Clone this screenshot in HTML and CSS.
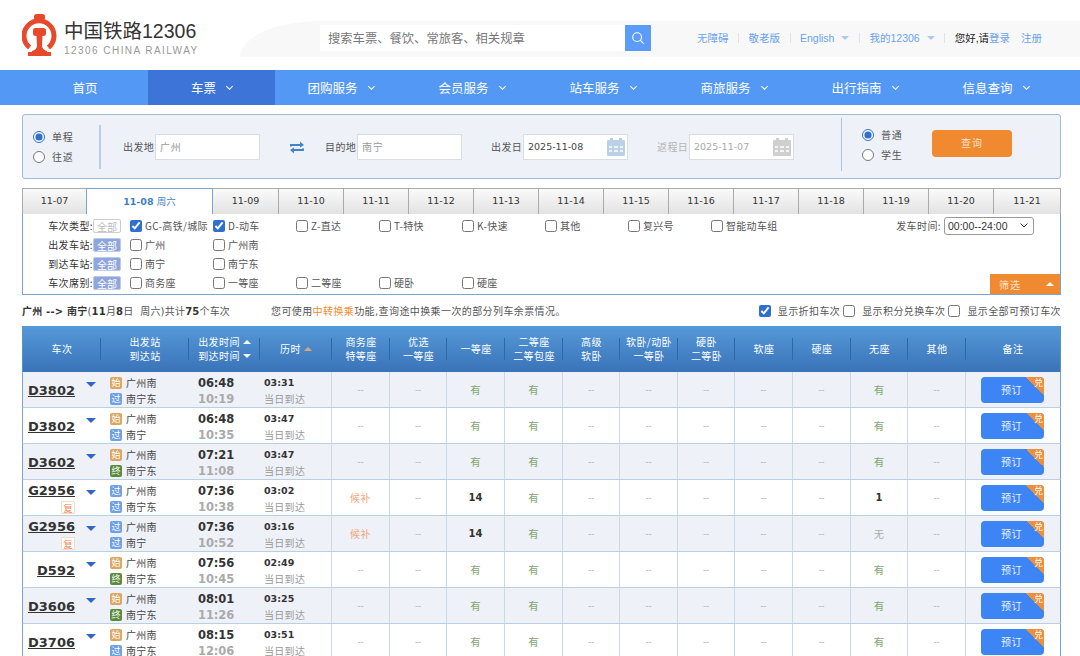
FILE: index.html
```html
<!DOCTYPE html>
<html lang="zh-CN">
<head>
<meta charset="utf-8">
<title>12306</title>
<link rel="stylesheet" href="styles.css">
</head>
<body>
<header class="top">
  <div class="logo">
    <svg class="logo-mark" viewBox="22 14 35 42" width="35" height="42">
      <path d="M29.6 47.5A15 15 0 1 1 48.4 47.5" fill="none" stroke="#e8492a" stroke-width="5" stroke-linecap="butt"/>
      <rect x="34" y="14" width="11" height="6" rx="2.5" fill="#e8492a"/>
      <path d="M33 30.5Q33 28 35.5 28H43.500Q46 28 46 30.500V33.500Q46 36 43 36H42.500L42 46Q42.500 50 47 51V55.500H32V51Q36.500 50 37 46L36.500 36H36Q33 36 33 33.500Z" fill="#e8492a"/>
      <rect x="28" y="52" width="23" height="4" fill="#e8492a"/>
    </svg>
    <div class="logo-text">
      <div class="logo-title">中国铁路12306</div>
      <div class="logo-sub">12306 CHINA RAILWAY</div>
    </div>
  </div>
  <div class="band">
    <div class="search">
      <div class="search-input">搜索车票、餐饮、常旅客、相关规章</div>
      <div class="search-btn">
        <svg viewBox="0 0 16 16" width="14" height="14"><circle cx="7" cy="7" r="5" fill="none" stroke="#fff" stroke-width="1.300"/><path d="M10.700 10.700L14.500 14.500" stroke="#fff" stroke-width="1.400" fill="none"/></svg>
      </div>
    </div>
    <nav class="links">
      <a>无障碍</a><i class="sep"></i>
      <a>敬老版</a><i class="sep"></i>
      <a>English<b class="drop"></b></a><i class="sep"></i>
      <a>我的12306<b class="drop"></b></a><i class="sep"></i>
      <span class="hello">您好,请</span><a>登录</a><a class="reg">注册</a>
    </nav>
  </div>
</header>

<nav class="menu">
  <a>首页</a>
  <a class="on">车票<i class="chev"></i></a>
  <a>团购服务<i class="chev"></i></a>
  <a>会员服务<i class="chev"></i></a>
  <a>站车服务<i class="chev"></i></a>
  <a>商旅服务<i class="chev"></i></a>
  <a>出行指南<i class="chev"></i></a>
  <a>信息查询<i class="chev"></i></a>
</nav>

<main class="main">
  <section class="query">
    <div class="radios r1">
      <label class="rad"><input type="radio" name="trip" checked>单程</label>
      <label class="rad"><input type="radio" name="trip">往返</label>
    </div>
    <span class="flab l1">出发地</span>
    <div class="field"><span class="ph">广州</span></div>
    <svg class="swap" viewBox="0 0 16 13" width="16" height="13"><path d="M1 5.500V3H11V0.500L15 4L11 6.500V5H3V5.500ZM15 7.500V10H5V12.500L1 9L5 6.500V8H13V7.500Z" fill="#3d85c6"/></svg>
    <span class="flab l2">目的地</span>
    <div class="field"><span class="ph">南宁</span></div>
    <span class="flab l3">出发日</span>
    <div class="field"><span class="date">2025-11-08</span>
      <svg class="cal" viewBox="0 0 18 18" width="18" height="18"><rect x="0" y="2" width="18" height="16" rx="1" fill="#b9d0e6"/><rect x="3" y="0" width="3" height="4" fill="#b9d0e6"/><rect x="12" y="0" width="3" height="4" fill="#b9d0e6"/><path d="M2 8h3v2H2zM7 8h4v2H7zM13 8h3v2h-3zM2 12h3v2H2zM7 12h4v2H7zM13 12h3v2h-3z" fill="#eef3f9"/></svg>
    </div>
    <span class="flab l4 dim">返程日</span>
    <div class="field"><span class="date dim">2025-11-07</span>
      <svg class="cal" viewBox="0 0 18 18" width="18" height="18"><rect x="0" y="2" width="18" height="16" rx="1" fill="#cfcfcf"/><rect x="3" y="0" width="3" height="4" fill="#cfcfcf"/><rect x="12" y="0" width="3" height="4" fill="#cfcfcf"/><path d="M2 8h3v2H2zM7 8h4v2H7zM13 8h3v2h-3zM2 12h3v2H2zM7 12h4v2H7zM13 12h3v2h-3z" fill="#f4f4f4"/></svg>
    </div>
    <div class="radios r2">
      <label class="rad"><input type="radio" name="who" checked>普通</label>
      <label class="rad"><input type="radio" name="who">学生</label>
    </div>
    <div class="go">查询</div>
  </section>

  <div class="tabs">
    <div class="tab">11-07</div>
    <div class="tab active">11-08 <span>周六</span></div>
    <div class="tab">11-09</div>
    <div class="tab">11-10</div>
    <div class="tab">11-11</div>
    <div class="tab">11-12</div>
    <div class="tab">11-13</div>
    <div class="tab">11-14</div>
    <div class="tab">11-15</div>
    <div class="tab">11-16</div>
    <div class="tab">11-17</div>
    <div class="tab">11-18</div>
    <div class="tab">11-19</div>
    <div class="tab">11-20</div>
    <div class="tab">11-21</div>
  </div>

  <section class="filter">
    <div class="frow">
      <span class="ftitle">车次类型:</span><span class="all off">全部</span>
      <label class="opt"><input type="checkbox" checked>GC-高铁/城际</label>
      <label class="opt"><input type="checkbox" checked>D-动车</label>
      <label class="opt"><input type="checkbox">Z-直达</label>
      <label class="opt"><input type="checkbox">T-特快</label>
      <label class="opt"><input type="checkbox">K-快速</label>
      <label class="opt"><input type="checkbox">其他</label>
      <label class="opt"><input type="checkbox">复兴号</label>
      <label class="opt"><input type="checkbox">智能动车组</label>
      <span class="dep">发车时间:</span>
      <select class="dep-sel"><option>00:00--24:00</option></select>
    </div>
    <div class="frow">
      <span class="ftitle">出发车站:</span><span class="all">全部</span>
      <label class="opt"><input type="checkbox">广州</label>
      <label class="opt"><input type="checkbox">广州南</label>
    </div>
    <div class="frow">
      <span class="ftitle">到达车站:</span><span class="all">全部</span>
      <label class="opt"><input type="checkbox">南宁</label>
      <label class="opt"><input type="checkbox">南宁东</label>
    </div>
    <div class="frow">
      <span class="ftitle">车次席别:</span><span class="all">全部</span>
      <label class="opt"><input type="checkbox">商务座</label>
      <label class="opt"><input type="checkbox">一等座</label>
      <label class="opt"><input type="checkbox">二等座</label>
      <label class="opt"><input type="checkbox">硬卧</label>
      <label class="opt"><input type="checkbox">硬座</label>
    </div>
    <div class="fold">筛选<i class="up"></i></div>
  </section>

  <div class="info">
    <span class="route"><b>广州 --&gt; 南宁</b>(<b>11</b>月<b>8</b>日&nbsp; 周六)共计<b>75</b>个车次</span>
    <span class="tip">您可使用<em>中转换乘</em>功能,查询途中换乘一次的部分列车余票情况。</span>
    <label class="show first"><input type="checkbox" checked>显示折扣车次</label>
    <label class="show"><input type="checkbox">显示积分兑换车次</label>
    <label class="show"><input type="checkbox">显示全部可预订车次</label>
  </div>

  <table class="trains">
    <colgroup>
      <col class="c79"><col class="c88"><col class="c71"><col class="c72">
      <col class="c58"><col class="c57"><col class="c58"><col class="c58"><col class="c57"><col class="c58"><col class="c57"><col class="c58"><col class="c58"><col class="c57"><col class="c58">
      <col class="c95">
    </colgroup>
    <thead>
      <tr>
        <th>车次</th>
        <th>出发站<br>到达站</th>
        <th>出发时间<i class="tri-up"></i><br>到达时间<i class="tri-down"></i></th>
        <th>历时<i class="tri-up hot"></i></th>
        <th>商务座<br>特等座</th>
        <th>优选<br>一等座</th>
        <th>一等座</th>
        <th>二等座<br>二等包座</th>
        <th>高级<br>软卧</th>
        <th>软卧/动卧<br>一等卧</th>
        <th>硬卧<br>二等卧</th>
        <th>软座</th>
        <th>硬座</th>
        <th>无座</th>
        <th>其他</th>
        <th class="last">备注</th>
      </tr>
    </thead>
    <tbody>
      <tr class="odd">
        <td><div class="tr-no"><div class="no-col"><a class="no">D3802</a></div><i class="more"></i></div></td>
        <td><div class="st"><span class="bd start">始</span>广州南</div><div class="st"><span class="bd pass">过</span>南宁东</div></td>
        <td><div class="t1">06:48</div><div class="t2">10:19</div></td>
        <td><div class="d1">03:31</div><div class="d2">当日到达</div></td>
        <td class="na">--</td><td class="na">--</td><td class="yes">有</td><td class="yes">有</td><td class="na">--</td><td class="na">--</td><td class="na">--</td><td class="na">--</td><td class="na">--</td><td class="yes">有</td><td class="na">--</td>
        <td class="last"><div class="book">预订<span class="ex"><span>兑</span></span></div></td>
      </tr>
      <tr>
        <td><div class="tr-no"><div class="no-col"><a class="no">D3802</a></div><i class="more"></i></div></td>
        <td><div class="st"><span class="bd start">始</span>广州南</div><div class="st"><span class="bd pass">过</span>南宁</div></td>
        <td><div class="t1">06:48</div><div class="t2">10:35</div></td>
        <td><div class="d1">03:47</div><div class="d2">当日到达</div></td>
        <td class="na">--</td><td class="na">--</td><td class="yes">有</td><td class="yes">有</td><td class="na">--</td><td class="na">--</td><td class="na">--</td><td class="na">--</td><td class="na">--</td><td class="yes">有</td><td class="na">--</td>
        <td class="last"><div class="book">预订<span class="ex"><span>兑</span></span></div></td>
      </tr>
      <tr class="odd">
        <td><div class="tr-no"><div class="no-col"><a class="no">D3602</a></div><i class="more"></i></div></td>
        <td><div class="st"><span class="bd start">始</span>广州南</div><div class="st"><span class="bd end">终</span>南宁东</div></td>
        <td><div class="t1">07:21</div><div class="t2">11:08</div></td>
        <td><div class="d1">03:47</div><div class="d2">当日到达</div></td>
        <td class="na">--</td><td class="na">--</td><td class="yes">有</td><td class="yes">有</td><td class="na">--</td><td class="na">--</td><td class="na">--</td><td class="na">--</td><td class="na">--</td><td class="yes">有</td><td class="na">--</td>
        <td class="last"><div class="book">预订<span class="ex"><span>兑</span></span></div></td>
      </tr>
      <tr>
        <td><div class="tr-no"><div class="no-col"><a class="no">G2956</a><span class="fu">复</span></div><i class="more"></i></div></td>
        <td><div class="st"><span class="bd pass">过</span>广州南</div><div class="st"><span class="bd pass">过</span>南宁东</div></td>
        <td><div class="t1">07:36</div><div class="t2">10:38</div></td>
        <td><div class="d1">03:02</div><div class="d2">当日到达</div></td>
        <td class="wait">候补</td><td class="na">--</td><td class="num">14</td><td class="yes">有</td><td class="na">--</td><td class="na">--</td><td class="na">--</td><td class="na">--</td><td class="na">--</td><td class="num">1</td><td class="na">--</td>
        <td class="last"><div class="book">预订<span class="ex"><span>兑</span></span></div></td>
      </tr>
      <tr class="odd">
        <td><div class="tr-no"><div class="no-col"><a class="no">G2956</a><span class="fu">复</span></div><i class="more"></i></div></td>
        <td><div class="st"><span class="bd pass">过</span>广州南</div><div class="st"><span class="bd pass">过</span>南宁</div></td>
        <td><div class="t1">07:36</div><div class="t2">10:52</div></td>
        <td><div class="d1">03:16</div><div class="d2">当日到达</div></td>
        <td class="wait">候补</td><td class="na">--</td><td class="num">14</td><td class="yes">有</td><td class="na">--</td><td class="na">--</td><td class="na">--</td><td class="na">--</td><td class="na">--</td><td class="none">无</td><td class="na">--</td>
        <td class="last"><div class="book">预订<span class="ex"><span>兑</span></span></div></td>
      </tr>
      <tr>
        <td><div class="tr-no"><div class="no-col"><a class="no">D592</a></div><i class="more"></i></div></td>
        <td><div class="st"><span class="bd start">始</span>广州南</div><div class="st"><span class="bd end">终</span>南宁东</div></td>
        <td><div class="t1">07:56</div><div class="t2">10:45</div></td>
        <td><div class="d1">02:49</div><div class="d2">当日到达</div></td>
        <td class="na">--</td><td class="na">--</td><td class="yes">有</td><td class="yes">有</td><td class="na">--</td><td class="na">--</td><td class="na">--</td><td class="na">--</td><td class="na">--</td><td class="yes">有</td><td class="na">--</td>
        <td class="last"><div class="book">预订<span class="ex"><span>兑</span></span></div></td>
      </tr>
      <tr class="odd">
        <td><div class="tr-no"><div class="no-col"><a class="no">D3606</a></div><i class="more"></i></div></td>
        <td><div class="st"><span class="bd start">始</span>广州南</div><div class="st"><span class="bd end">终</span>南宁东</div></td>
        <td><div class="t1">08:01</div><div class="t2">11:26</div></td>
        <td><div class="d1">03:25</div><div class="d2">当日到达</div></td>
        <td class="na">--</td><td class="na">--</td><td class="yes">有</td><td class="yes">有</td><td class="na">--</td><td class="na">--</td><td class="na">--</td><td class="na">--</td><td class="na">--</td><td class="yes">有</td><td class="na">--</td>
        <td class="last"><div class="book">预订<span class="ex"><span>兑</span></span></div></td>
      </tr>
      <tr>
        <td><div class="tr-no"><div class="no-col"><a class="no">D3706</a></div><i class="more"></i></div></td>
        <td><div class="st"><span class="bd start">始</span>广州南</div><div class="st"><span class="bd pass">过</span>南宁东</div></td>
        <td><div class="t1">08:15</div><div class="t2">12:06</div></td>
        <td><div class="d1">03:51</div><div class="d2">当日到达</div></td>
        <td class="na">--</td><td class="na">--</td><td class="yes">有</td><td class="yes">有</td><td class="na">--</td><td class="na">--</td><td class="na">--</td><td class="na">--</td><td class="na">--</td><td class="yes">有</td><td class="na">--</td>
        <td class="last"><div class="book">预订<span class="ex"><span>兑</span></span></div></td>
      </tr>
    </tbody>
  </table>
</main>
</body>
</html>
```
FILE: styles.css
```css
* { box-sizing: border-box; }
html, body { margin: 0; height: 656px; overflow: hidden; background: #fff; }
body { font-family: "DejaVu Sans", "Noto Sans CJK SC", sans-serif; font-size: 10px; color: #333; }
i, em { font-style: normal; }
input { margin: 0; }

/* header */
.top { height: 70px; display: flex; align-items: flex-start; }
.logo { width: 240px; height: 70px; padding: 14px 0 0 22px; display: flex; flex: none; }
.logo-mark { flex: none; }
.logo-text { margin-left: 7px; padding-top: 5px; }
.logo-title { font-family: "Liberation Sans", "Noto Sans CJK SC", sans-serif; font-size: 19.5px; line-height: 24px; color: #333; white-space: nowrap; }
.logo-sub { font-family: "Liberation Sans", sans-serif; font-size: 10px; letter-spacing: 1.45px; line-height: 12px; color: #999; margin-top: 2px; white-space: nowrap; }
.band { flex: 1; height: 36px; margin-top: 21px; background: #f8f8f8; border-radius: 80px 0 0 0 / 36px 0 0 0; padding-left: 80px; display: flex; align-items: center; }
.search { display: flex; height: 26px; width: 331px; margin-top: -2px; flex: none; }
.search-input { width: 305px; background: #fff; font-family: "Noto Sans CJK SC", sans-serif; font-size: 12.300px; line-height: 26px; padding-left: 8px; color: #777; white-space: nowrap; }
.search-btn { width: 26px; background: #5a9cf8; display: flex; align-items: center; justify-content: center; }
.links { display: flex; align-items: center; margin-left: 46px; font-family: "Liberation Sans", "Noto Sans CJK SC", sans-serif; font-size: 10.500px; color: #6aa2ee; white-space: nowrap; margin-top: -3px; }
.links a { display: flex; align-items: center; }
.sep { width: 1px; height: 10px; background: #dde3ec; margin: 0 9.500px; }
.drop { width: 0; height: 0; border: 4px solid transparent; border-top: 4px solid #a9c8f2; border-bottom: 0; margin-left: 7px; }
.hello { color: #222; }
.reg { margin-left: 11px; }

/* nav */
.menu { height: 35px; background: #5498f5; display: grid; grid-template-columns: 126px 127px repeat(6, 131px); padding-left: 22px; }
.menu a { display: flex; align-items: center; justify-content: center; color: #fff; font-family: "Noto Sans CJK SC", sans-serif; font-size: 12.500px; }
.menu .on { background: #3d74d8; }
.chev { width: 5px; height: 5px; border-right: 1px solid #fff; border-bottom: 1px solid #fff; transform: rotate(45deg); margin: -3px 0 0 11px; }

/* main */
.main { padding: 0 19px 0 22px; }
.query { height: 65px; margin-top: 9px; background: #eef1f8; border: 1px solid #9dbcdc; border-radius: 3px; display: flex; align-items: center; font-family: "Noto Sans CJK SC", sans-serif; font-size: 10px; color: #555; }
.radios { display: flex; flex-direction: column; height: 44px; justify-content: center; gap: 6px; flex: none; }
.rad { display: flex; align-items: center; height: 14px; letter-spacing: .8px; }
.rad input { width: 12px; height: 12px; margin-right: 7px; accent-color: #2e6fd0; }
.r1 { width: 78px; padding-left: 10px; border-right: 2px solid #b9d0e8; margin-right: 22px; }
.r2 { margin-left: 47px; padding-left: 20px; border-left: 1px solid #a9c6e2; height: 53px; width: 91px; margin-top: -4px; }
.flab { letter-spacing: .4px; white-space: nowrap; width: 32px; flex: none; }
.l2 { margin-left: 20px; }
.l3 { margin-left: 29px; }
.l4 { margin-left: 29px; }
.dim { color: #b5b5b5; }
.field { width: 105px; height: 26px; margin-top: 0; background: #fff; border: 1px solid #d9dde3; display: flex; align-items: center; padding-left: 4px; flex: none; }
.ph { color: #999; letter-spacing: .8px; }
.date { font-family: "DejaVu Sans", sans-serif; font-size: 9.500px; color: #444; }
.date.dim { color: #aaa; }
.cal { margin-left: auto; margin-right: 2px; }
.swap { margin-left: 29px; margin-top: 2px; flex: none; }
.go { width: 80px; height: 27px; margin-top: -6px; background: #f08a30; border-radius: 4px; color: #f8e0c8; text-align: center; line-height: 26px; letter-spacing: 1px; flex: none; }

/* date tabs */
.tabs { display: grid; grid-template-columns: 64px 127px repeat(12, 65px) 1fr; margin-top: 9px; height: 25px; position: relative; z-index: 1; }
.tab { border: 1px solid #aaa; border-right: 0; border-bottom: 0; background: linear-gradient(#fafafa, #e2e2e2); text-align: center; line-height: 24px; font-size: 9.500px; color: #333; }
.tab:last-child { border-right: 1px solid #aaa; }
.tab.active { background: #fff; border: 1px solid #7aa5d2; border-bottom: 0; height: 26px; color: #3f7fc6; font-weight: bold; }
.tab.active span { font-family: "Noto Sans CJK SC", sans-serif; font-weight: normal; }
.tab.active + .tab { border-left: 0; }

/* filter */
.filter { position: relative; height: 82px; border: 1px solid #7aa5d2; padding: 2px 26px 0 0; font-family: "Noto Sans CJK SC", sans-serif; font-size: 10px; color: #555; }
.frow { display: flex; align-items: center; height: 19px; white-space: nowrap; }
.ftitle { width: 70px; text-align: right; color: #333; letter-spacing: .4px; flex: none; }
.all { width: 28px; height: 14px; line-height: 13px; text-align: center; background: #8fa6dc; border-radius: 2px; color: #fff; margin-right: 9px; border: 1px solid #bccbea; flex: none; }
.all.off { background: #fff; color: #bbb; border-color: #ccc; }
.opt { width: 83px; display: flex; align-items: center; letter-spacing: .3px; flex: none; }
.opt input { width: 12px; height: 12px; margin-right: 3px; accent-color: #2e6fd0; }
.dep { margin-left: auto; margin-right: 3px; letter-spacing: .4px; }
.dep-sel { appearance: none; width: 90px; height: 18px; font-family: "Liberation Sans", sans-serif; font-size: 10.500px; padding: 0 0 0 3px; color: #333; background: #fff url("data:image/svg+xml,%3Csvg xmlns='http://www.w3.org/2000/svg' width='8' height='5'%3E%3Cpath d='M.5.5L4 4L7.500.5' fill='none' stroke='%23444'/%3E%3C/svg%3E") no-repeat right 5px center; border: 1px solid #999; border-radius: 3px; }
.fold { position: absolute; right: 0; bottom: 0; width: 70px; height: 20px; background: #f08a30; color: #fbe4cd; line-height: 19px; padding-left: 9px; letter-spacing: 1px; display: flex; align-items: center; justify-content: space-between; padding-right: 6px; }
.up { width: 0; height: 0; border: 4px solid transparent; border-bottom: 4px solid #fff; border-top: 0; }

/* info line */
.info { height: 31px; display: flex; align-items: center; font-family: "DejaVu Sans", "Noto Sans CJK SC", sans-serif; font-size: 10px; white-space: nowrap; color: #555; }
.route { width: 249px; flex: none; letter-spacing: .2px; }
.route b { color: #333; }
.tip { letter-spacing: .4px; }
.tip em { color: #f08a30; }
.show { display: flex; align-items: center; letter-spacing: .4px; margin-left: 3px; }
.show input { width: 12px; height: 12px; margin-right: 7px; accent-color: #2e6fd0; }
.show.first { margin-left: auto; }

/* table */
.trains { width: 1039px; table-layout: fixed; border-collapse: separate; border-spacing: 0; font-family: "Noto Sans CJK SC", sans-serif; font-size: 10px; }
.c79 { width: 79px; } .c88 { width: 88px; } .c71 { width: 71px; } .c72 { width: 72px; }
.c58 { width: 58px; } .c57 { width: 57px; } .c95 { width: 95px; }
.trains thead tr { background: linear-gradient(#5599d8, #3a73b8); }
.trains th { height: 46px; padding: 0; color: #fff; font-weight: normal; font-size: 10px; line-height: 14px; letter-spacing: .4px; text-align: center; background: linear-gradient(#2f68a8, #2f68a8) right center / 1px 22px no-repeat; white-space: nowrap; }
.trains th:nth-child(1) { border-left: 1px solid #5a90c8; }
.trains th.last { background: none; border-right: 1px solid #5a90c8; }
.tri-up, .tri-down { display: inline-block; width: 0; height: 0; border: 4px solid transparent; margin-left: 3px; vertical-align: 2px; }
.tri-up { border-bottom: 4px solid #fff; border-top: 0; }
.tri-down { border-top: 4px solid #fff; border-bottom: 0; }
.tri-up.hot { border-bottom-color: #dfa678; }
.trains td { height: 36px; padding: 0; text-align: center; border-right: 1px solid #c9d9e6; border-bottom: 1px solid #b9cfe4; color: #555; }
.trains td:nth-child(1) { border-left: 1px solid #7aa5d2; border-right: 0; }
.trains td:nth-child(2), .trains td:nth-child(3) { border-right: 0; }
.trains td.last { border-right: 1px solid #7aa5d2; }
.odd td { background: #eef1f8; }
.tr-no { display: flex; height: 35px; }
.no-col { width: 52px; flex: none; display: flex; flex-direction: column; align-items: flex-end; justify-content: center; padding-top: 1px; }
.no { font-family: "DejaVu Sans", sans-serif; font-weight: bold; font-size: 13px; line-height: 15px; color: #333; text-decoration: underline; }
.fu { width: 14px; height: 13px; line-height: 12px; border: 1px solid #f6dcc4; color: #ef8a5a; background: #fff; font-size: 9.500px; margin: 3px 0 0 0; border-radius: 1px; }
.more { width: 0; height: 0; border: 5px solid transparent; border-top: 5px solid #2f66c8; border-bottom: 0; margin: 10px 0 0 11px; }
.st { display: flex; align-items: center; height: 16px; text-align: left; padding-left: 9px; letter-spacing: .3px; color: #444; }
.st:first-child { margin-top: 2px; }
.bd { width: 12px; height: 12px; border-radius: 2px; font-size: 9px; line-height: 12px; text-align: center; color: #fff; margin-right: 4px; flex: none; letter-spacing: 0; }
.start { background: #dba662; }
.pass { background: #6f9fe4; }
.end { background: #5a8a3c; }
.t1, .t2 { font-family: "DejaVu Sans", sans-serif; font-weight: bold; font-size: 11.500px; line-height: 16px; text-align: left; padding-left: 9px; letter-spacing: -.1px; }
.t1 { color: #333; margin-top: 3px; }
.t2 { color: #aaa; }
.d1 { font-family: "DejaVu Sans", sans-serif; font-weight: bold; font-size: 9.500px; line-height: 16px; text-align: left; padding-left: 4px; color: #333; margin-top: 3px; }
.d2 { line-height: 16px; text-align: left; padding-left: 4px; color: #999; letter-spacing: .3px; }
.trains .na { color: #aaa; font-size: 9px; }
.trains .yes { color: #7fa870; font-size: 10.500px; }
.trains .wait { color: #f2a87a; letter-spacing: .5px; }
.trains .num { font-family: "DejaVu Sans", sans-serif; font-weight: bold; color: #333; }
.trains .none { color: #aaa; }
.book { position: relative; overflow: hidden; width: 63px; height: 26px; margin: 0 0 0 15px; background: #3d85f5; border-radius: 4px; color: #e9f1fe; line-height: 26px; text-align: center; padding-right: 2px; letter-spacing: .6px; }
.ex { position: absolute; top: 0; right: 0; width: 18px; height: 18px; background: linear-gradient(to top right, transparent 50%, #ee8f3c 50%); }
.ex span { position: absolute; top: 0; right: 1px; font-size: 9px; line-height: 11px; letter-spacing: 0; color: #fff; }
```
